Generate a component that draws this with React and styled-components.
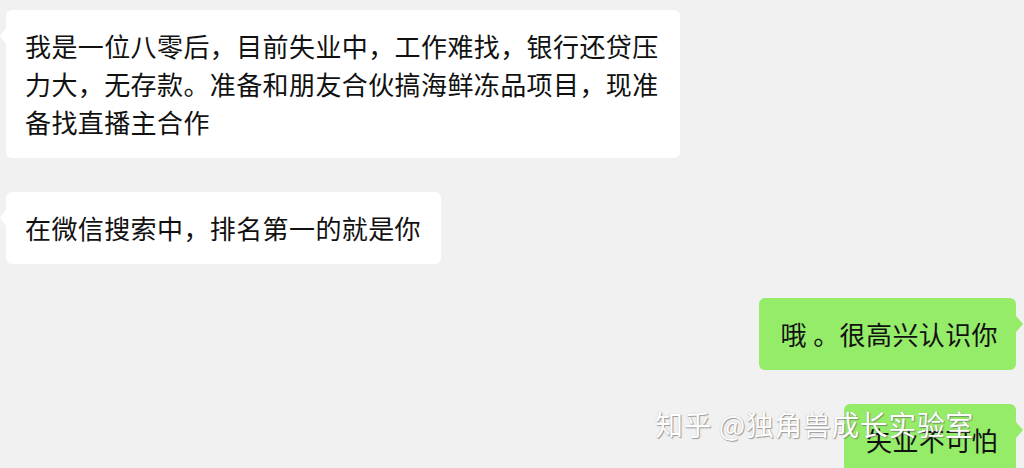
import React from "react";
import styled, { createGlobalStyle } from "styled-components";

const Global = createGlobalStyle`
  html, body { margin: 0; padding: 0; background: #f1f1f1; }
  body { font-family: "Noto Sans CJK SC", "Noto Sans", sans-serif; }
`;

const Chat = styled.div`
  position: relative;
  width: 1024px;
  height: 468px;
  overflow: hidden;
  display: flex;
  flex-direction: column;
  gap: 34px;
  padding: 10px 8px 0 6px;
  box-sizing: border-box;
`;

const Row = styled.div`
  display: flex;
  justify-content: ${(p) => (p.$mine ? "flex-end" : "flex-start")};
`;

const Bubble = styled.div`
  position: relative;
  box-sizing: border-box;
  max-width: 674px;
  padding: ${(p) => (p.$mine ? "17px 18px 17px 22px" : "17px 20px 17px 19px")};
  background: ${(p) => (p.$mine ? "#95ec69" : "#ffffff")};
  border-radius: 6px;
  color: #111;
  font-size: 26px;
  letter-spacing: 0.4px;
  line-height: 38px;
  white-space: pre-wrap;

  &::before {
    content: "";
    position: absolute;
    top: 18px;
    ${(p) => (p.$mine ? "right: -7px;" : "left: -6px;")}
    border-top: 8px solid transparent;
    border-bottom: 8px solid transparent;
    ${(p) =>
      p.$mine
        ? "border-left: 7px solid #95ec69;"
        : "border-right: 6px solid #ffffff;"}
  }
`;

const Watermark = styled.div`
  position: absolute;
  left: 655px;
  top: 404px;
  font-family: "Noto Sans CJK SC", sans-serif;
  font-size: 28px;
  line-height: 40px;
  color: #ffffff;
  letter-spacing: 0.5px;
  text-shadow: 1px 1px 1px rgba(90, 90, 90, 0.55), 0 0 1px rgba(120, 120, 120, 0.5);
  white-space: nowrap;
  pointer-events: none;
`;

const messages = [
  {
    mine: false,
    text: "我是一位八零后，目前失业中，工作难找，银行还贷压力大，无存款。准备和朋友合伙搞海鲜冻品项目，现准备找直播主合作",
  },
  { mine: false, text: "在微信搜索中，排名第一的就是你" },
  { mine: true, text: "哦 。很高兴认识你" },
  { mine: true, text: "失业不可怕" },
];

export default function App() {
  return (
    <>
      <Global />
      <Chat>
        {messages.map((m, i) => (
          <Row key={i} $mine={m.mine}>
            <Bubble $mine={m.mine}>{m.text}</Bubble>
          </Row>
        ))}
        <Watermark>知乎 @独角兽成长实验室</Watermark>
      </Chat>
    </>
  );
}
